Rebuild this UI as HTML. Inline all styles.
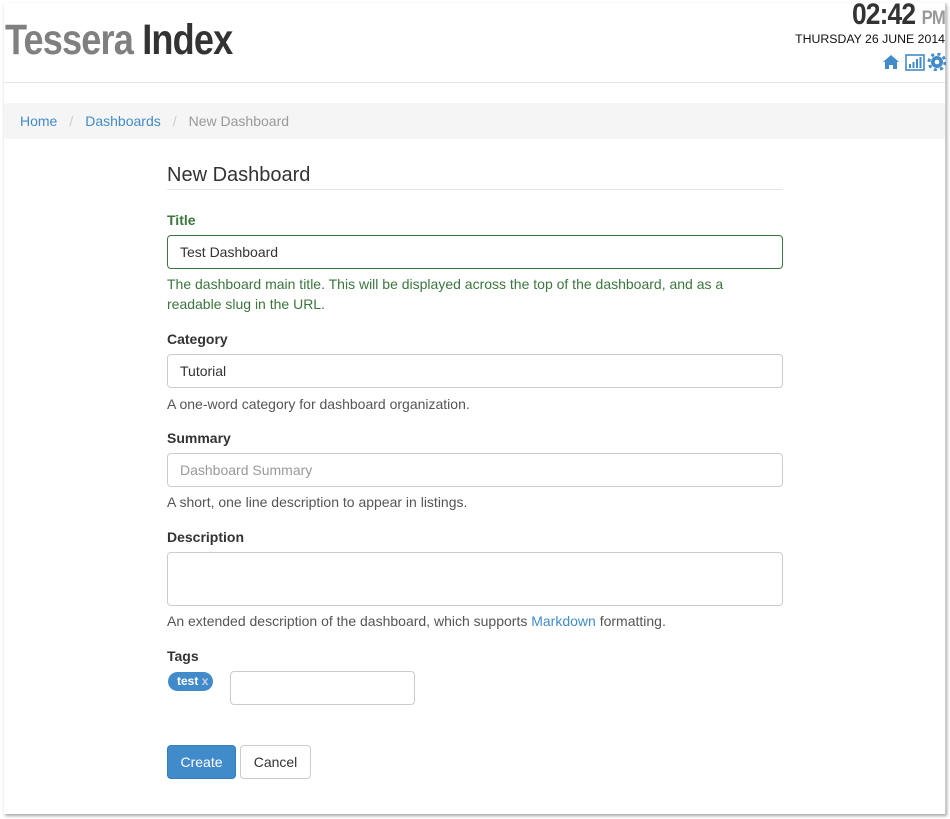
<!DOCTYPE html>
<html><head><style>
*{box-sizing:border-box}
body{margin:0;width:950px;height:819px;background:#fff;font-family:"Liberation Sans",Arial,sans-serif;font-size:14px;color:#333;position:relative;overflow:hidden}
.frame{position:absolute;left:4px;top:3px;width:942px;height:811px;background:#fff;border-right:1px solid #ccc;box-shadow:1px 2px 3px rgba(0,0,0,.35)}
.a{position:absolute}
.logo{left:5px;top:16px;font-weight:bold;font-size:43px;letter-spacing:-1px;white-space:nowrap;transform:scaleX(0.84);transform-origin:0 0}
.hr{left:4px;width:941px;height:1px;background:#e5e5e5}
.bc{left:4px;top:103px;width:941px;height:36px;background:#f5f5f5;border-radius:3px;padding:10px 16px;font-size:14px}
.bc a{color:#428bca}.bc .s{color:#ccc;padding:0 12px}
label{position:absolute;left:167px;font-weight:bold;font-size:14px}
.in{position:absolute;left:167px;width:616px;height:34px;border:1px solid #ccc;border-radius:4px;padding:8px 12px;font-size:14px}
.help{position:absolute;left:167px;font-size:14px;color:#555;line-height:20px}
</style></head><body>
<div class="frame"></div>
<div class="a logo"><span style="color:#808080">Tessera</span> <span style="color:#333">Index</span></div>
<div class="a" style="right:5px;top:0;text-align:right;white-space:nowrap">
<div style="font-weight:bold;font-size:30px;color:#333;letter-spacing:-1px;line-height:29px;transform:scaleX(0.88);transform-origin:100% 0">02:42 <span style="color:#999;font-size:19px">PM</span></div>
<div style="font-size:12.3px;line-height:12px;color:#111">THURSDAY 26 JUNE 2014</div>
</div>
<svg class="a" style="left:882px;top:53px" width="64" height="18" viewBox="0 0 64 18">
<path d="M1 9 L9 2 L17 9 L15 9 L15 16 L11 16 L11 12 L7 12 L7 16 L3 16 L3 9Z" fill="#428bca"/>
<rect x="24" y="2" width="18" height="15" fill="none" stroke="#428bca" stroke-width="1.6"/>
<rect x="27" y="11" width="2" height="4" fill="#428bca"/><rect x="30.5" y="9" width="2" height="6" fill="#428bca"/><rect x="34" y="6" width="2" height="9" fill="#428bca"/><rect x="37.5" y="4" width="2" height="11" fill="#428bca"/>
<circle cx="55" cy="9" r="6" fill="#428bca"/><circle cx="55" cy="9" r="8" fill="none" stroke="#428bca" stroke-width="3" stroke-dasharray="3 3.3"/><circle cx="55" cy="9" r="2.3" fill="#fff"/>
</svg>
<div class="a hr" style="top:82px"></div>
<div class="a bc"><a>Home</a><span class="s">/</span><a>Dashboards</a><span class="s">/</span><span style="color:#999">New Dashboard</span></div>
<div class="a" style="left:167px;top:164px;font-size:20px;color:#333">New Dashboard</div>
<div class="a hr" style="left:167px;width:616px;top:189px"></div>
<label style="top:212px;color:#3c763d">Title</label>
<div class="in" style="top:235px;border-color:#3c763d">Test Dashboard</div>
<div class="help" style="top:274px;color:#3c763d">The dashboard main title. This will be displayed across the top of the dashboard, and as a<br>readable slug in the URL.</div>
<label style="top:331px">Category</label>
<div class="in" style="top:354px">Tutorial</div>
<div class="help" style="top:394px">A one-word category for dashboard organization.</div>
<label style="top:430px">Summary</label>
<div class="in" style="top:453px;color:#999">Dashboard Summary</div>
<div class="help" style="top:492px">A short, one line description to appear in listings.</div>
<label style="top:529px">Description</label>
<div class="in" style="top:552px;height:54px"></div>
<div class="help" style="top:611px">An extended description of the dashboard, which supports <span style="color:#428bca">Markdown</span> formatting.</div>
<label style="top:648px">Tags</label>
<div class="a" style="left:168px;top:672px;width:45px;height:19px;border-radius:10px;background:#428bca;color:#fff;font-weight:bold;font-size:12px;padding:2px 0 0 9px">test <span style="color:#ccd">x</span></div>
<div class="in" style="left:230px;top:671px;width:185px;height:34px"></div>
<div class="a" style="left:167px;top:745px;width:69px;height:34px;background:#428bca;border:1px solid #357ebd;border-radius:4px;color:#fff;text-align:center;line-height:32px">Create</div>
<div class="a" style="left:240px;top:745px;width:71px;height:34px;background:#fff;border:1px solid #ccc;border-radius:4px;color:#333;text-align:center;line-height:32px">Cancel</div>
</body></html>
